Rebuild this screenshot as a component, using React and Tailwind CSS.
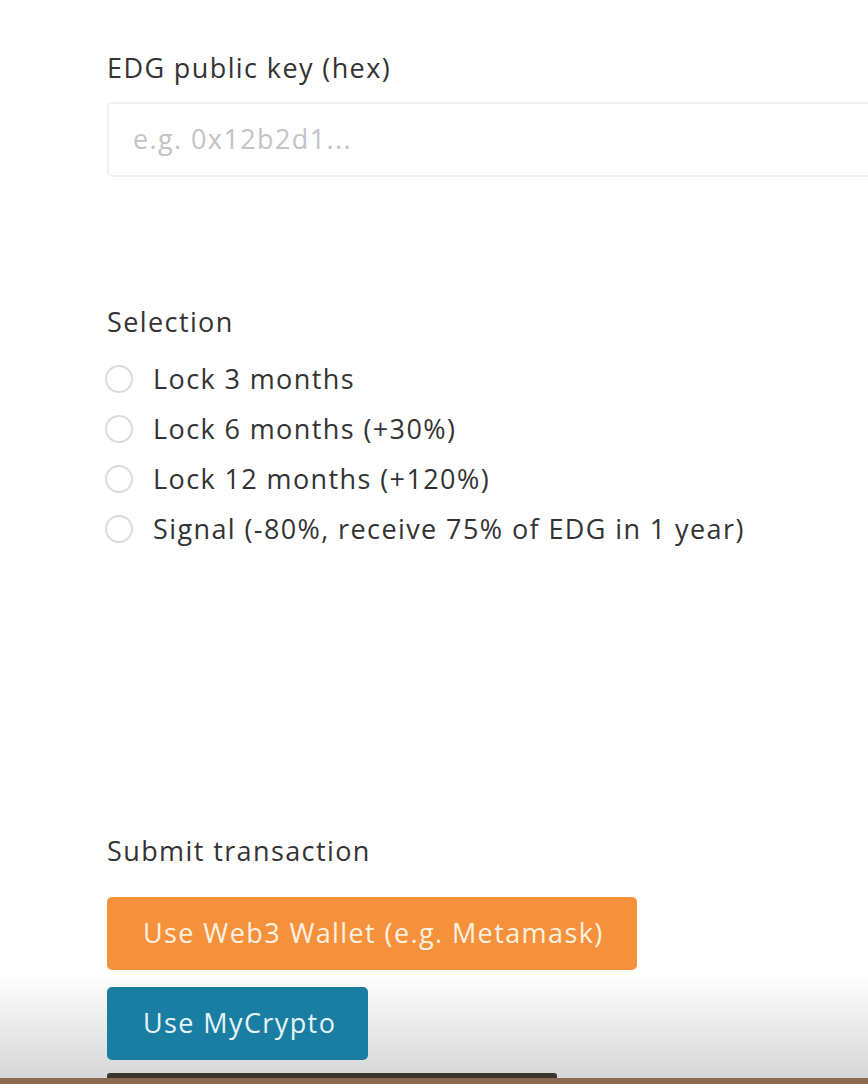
export default function App() {
  const options = [
    "Lock 3 months",
    "Lock 6 months (+30%)",
    "Lock 12 months (+120%)",
    "Signal (-80%, receive 75% of EDG in 1 year)",
  ];

  return (
    <div
      className="relative h-[1084px] w-[868px] overflow-hidden bg-white text-[#333]"
      style={{ fontFamily: '"Open Sans", "Noto Sans", sans-serif' }}
    >
      <div className="absolute inset-x-0 bottom-0 h-[110px] bg-gradient-to-b from-white to-[#d4d4d4]" />

      <div className="relative pl-[107px] pt-[50px] text-[27px] tracking-[1.4px]">
        {/* public key */}
        <label className="block leading-[36px]">EDG public key (hex)</label>
        <div className="mt-[16px] -mr-[20px] flex h-[75px] items-center rounded-[5px] border-2 border-[#f0f0f0] pl-[24px]">
          <span className="text-[#c4c4c4]">e.g. 0x12b2d1...</span>
        </div>

        {/* selection */}
        <div className="mt-[127px] leading-[36px]">Selection</div>
        <div className="mt-[14px] flex flex-col">
          {options.map((o) => (
            <div key={o} className="flex h-[50px] items-center">
              <span className="-ml-[2px] h-[28px] w-[28px] shrink-0 rounded-full border-2 border-[#dcdcdc] bg-white" />
              <span className="ml-[20px]">{o}</span>
            </div>
          ))}
        </div>

        {/* submit */}
        <div className="mt-[279px] leading-[36px]">Submit transaction</div>
        <div className="mt-[28px] flex flex-col items-start">
          <button className="flex h-[73px] w-[530px] items-center rounded-[5px] bg-[#f5913b] pl-[36px] tracking-[1.4px] text-[#fff1e2]">
            Use Web3 Wallet (e.g. Metamask)
          </button>
          <button className="mt-[17px] flex h-[73px] w-[261px] items-center rounded-[5px] bg-[#1a7ea2] pl-[36px] tracking-[1.4px] text-[#e6f4f9]">
            Use MyCrypto
          </button>
          <div className="mt-[13px] h-[12px] w-[450px] rounded-t-[3px] bg-[#3b3530]" />
        </div>
      </div>

      <div className="absolute inset-x-0 bottom-0 h-[6px] bg-[#8a6a50]" />
    </div>
  );
}
